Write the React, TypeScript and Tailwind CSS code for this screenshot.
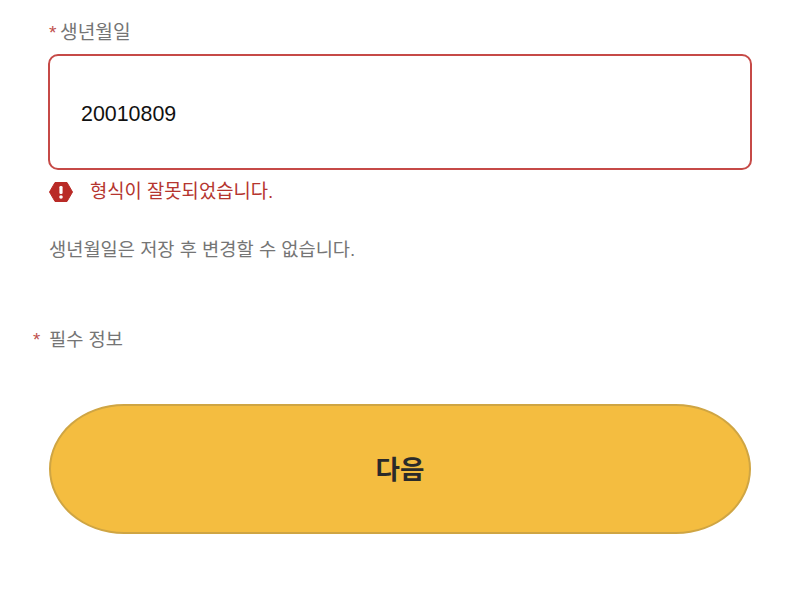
const font = "font-['Liberation_Sans','Noto_Sans_CJK_KR',sans-serif]";

export default function App() {
  return (
    <div className={`w-[800px] h-[604px] bg-white overflow-hidden px-[49px] pt-[19px] ${font}`}>
      {/* 생년월일 */}
      <label className="flex items-center h-7 text-[19.2px] text-[#757575]">
        <span className="text-[#c0504d] w-[11px]">*</span>
        생년월일
      </label>
      <div className="mt-[7px] -ml-px h-[116px] w-[704px] rounded-[10px] border-[2.5px] border-[#c64a47] flex items-center pl-[31px] pt-[5px] text-[21.4px] text-[#111]">
        20010809
      </div>

      <div className="mt-[8px] flex items-center h-7 text-[18.8px] text-[#b5352f]">
        <svg width="24" height="20" viewBox="0 0 24 20" className="shrink-0">
          <polygon points="6,0.5 18,0.5 23.5,10 18,19.5 6,19.5 0.5,10" fill="#b92b27" stroke="#b92b27" strokeLinejoin="round" />
          <rect x="10.4" y="4" width="3.2" height="8" rx="1.2" fill="#fff" />
          <circle cx="12" cy="15" r="1.8" fill="#fff" />
        </svg>
        <span className="ml-[17px]">형식이 잘못되었습니다.</span>
      </div>

      <p className="mt-[30px] h-7 flex items-center text-[18.7px] text-[#757575]">
        생년월일은 저장 후 변경할 수 없습니다.
      </p>

      <div className="mt-[62px] -ml-4 flex items-center h-7 text-[18.7px] text-[#757575]">
        <span className="text-[#c0504d] w-4">*</span>
        필수 정보
      </div>

      <button className="mt-[50px] w-[702px] h-[130px] rounded-[75px/65px] border-2 border-[#cfa543] bg-[#f4bd40] pt-[3px] text-[26.5px] font-bold text-[#2a2a2a] flex items-center justify-center">
        다음
      </button>
    </div>
  );
}
